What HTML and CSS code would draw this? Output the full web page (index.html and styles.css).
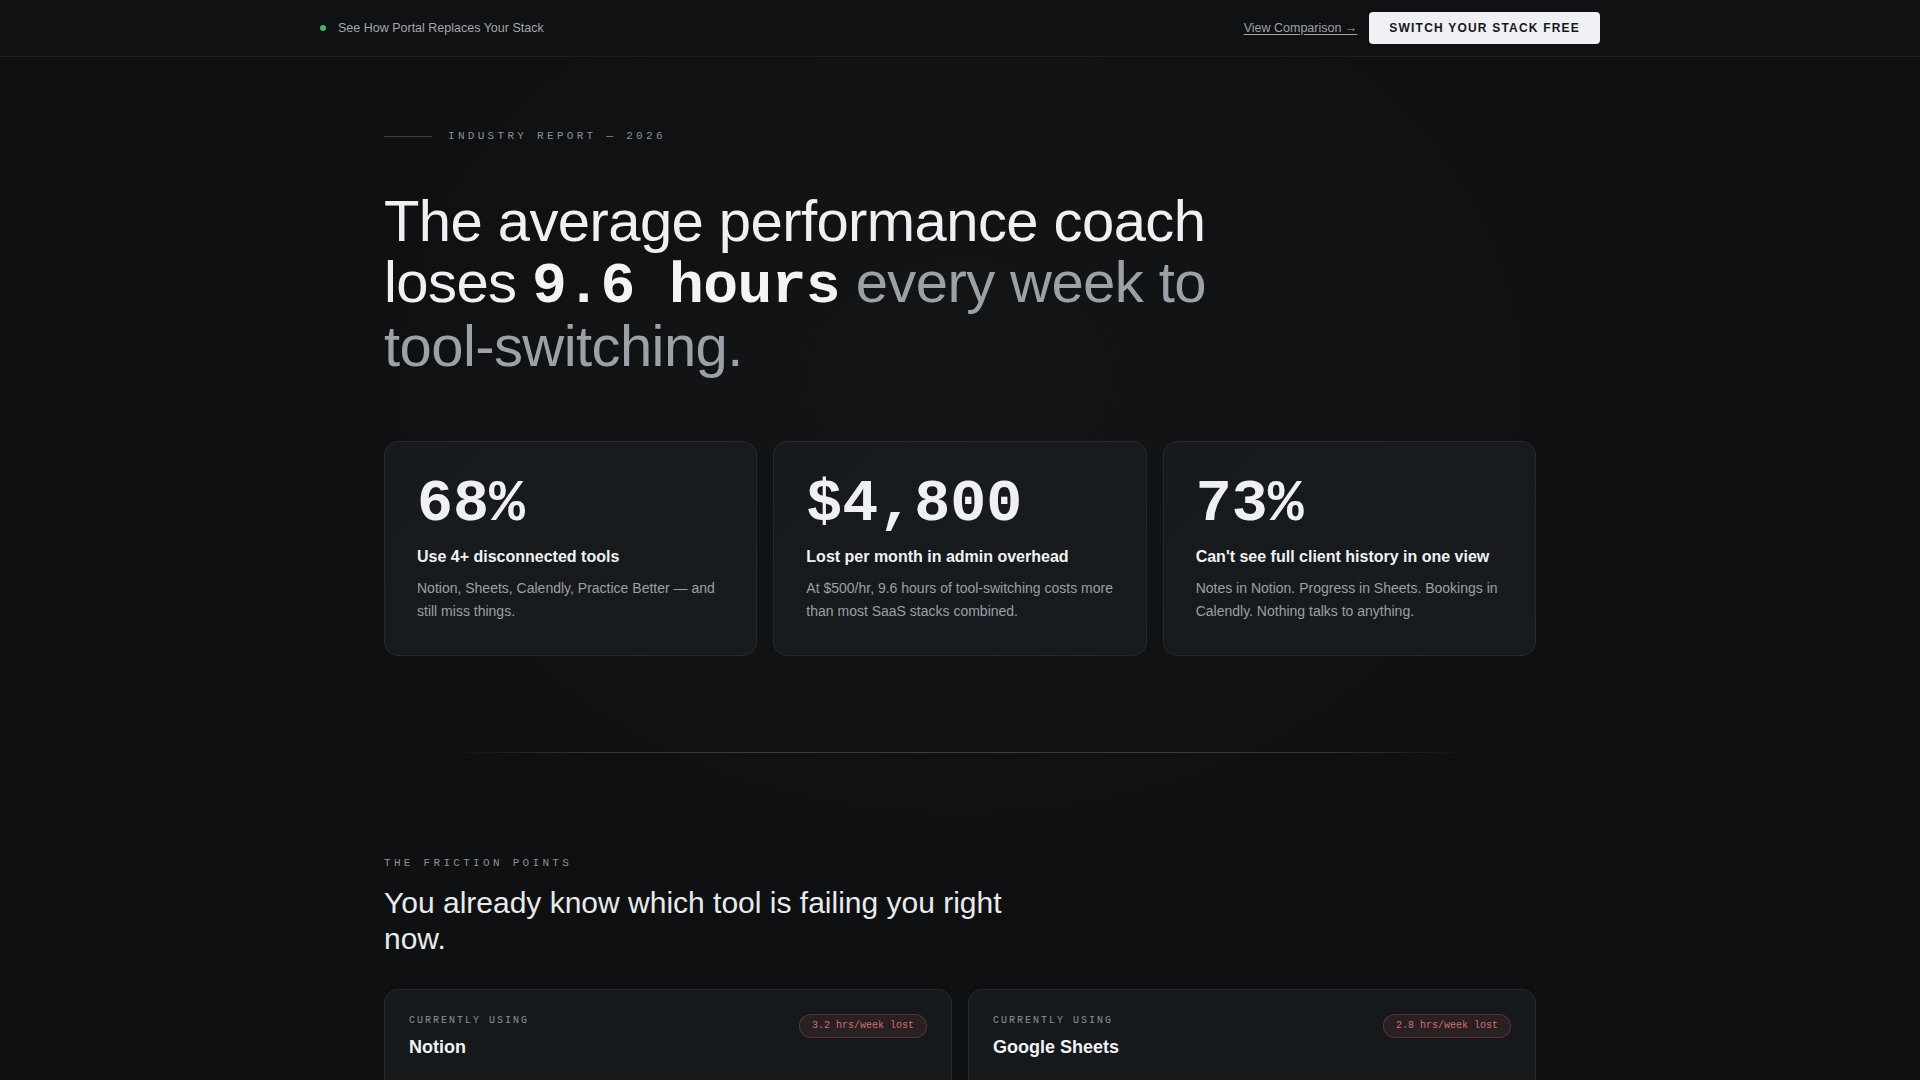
FILE: index.html
```html
<!DOCTYPE html>
<html lang="en">
<head>
  <meta charset="UTF-8">
  <meta name="viewport" content="width=device-width, initial-scale=1.0">
  <title>Portal — Industry Report 2026</title>
  <link rel="stylesheet" href="styles.css">
</head>
<body>
  <header class="topbar">
    <div class="topbar-inner">
      <div class="topbar-note">
        <span class="dot"></span>
        <span>See How Portal Replaces Your Stack</span>
      </div>
      <div class="topbar-actions">
        <a href="#" class="link-compare">View Comparison →</a>
        <a href="#" class="btn-light">Switch Your Stack Free</a>
      </div>
    </div>
  </header>

  <main class="page">
    <!-- Hero -->
    <section class="hero">
      <div class="eyebrow">
        <span class="eyebrow-line"></span>
        <span>Industry Report — 2026</span>
      </div>
      <h1 class="hero-title">
        The average performance coach loses <span class="mono-strong">9.6 hours</span>
        <span class="muted">every week to tool-switching.</span>
      </h1>

      <div class="stats">
        <div class="stat-card">
          <div class="stat-num">68%</div>
          <div class="stat-title">Use 4+ disconnected tools</div>
          <p class="stat-desc">Notion, Sheets, Calendly, Practice Better — and still miss things.</p>
        </div>
        <div class="stat-card">
          <div class="stat-num">$4,800</div>
          <div class="stat-title">Lost per month in admin overhead</div>
          <p class="stat-desc">At $500/hr, 9.6 hours of tool-switching costs more than most SaaS stacks combined.</p>
        </div>
        <div class="stat-card">
          <div class="stat-num">73%</div>
          <div class="stat-title">Can't see full client history in one view</div>
          <p class="stat-desc">Notes in Notion. Progress in Sheets. Bookings in Calendly. Nothing talks to anything.</p>
        </div>
      </div>
    </section>

    <div class="divider"></div>

    <!-- Friction points -->
    <section class="friction">
      <div class="section-label">The Friction Points</div>
      <h2 class="section-title">You already know which tool is failing you right now.</h2>

      <div class="tools">
        <div class="tool-card">
          <div class="tool-head">
            <div>
              <div class="tool-label">Currently using</div>
              <div class="tool-name">Notion</div>
            </div>
            <span class="badge-lost">3.2 hrs/week lost</span>
          </div>
        </div>
        <div class="tool-card">
          <div class="tool-head">
            <div>
              <div class="tool-label">Currently using</div>
              <div class="tool-name">Google Sheets</div>
            </div>
            <span class="badge-lost">2.8 hrs/week lost</span>
          </div>
        </div>
      </div>
    </section>
  </main>
</body>
</html>
```

FILE: styles.css
```css
/* Base */
body {
  margin: 0;
  font-family: 'Liberation Sans', Arial, sans-serif;
  color: #eef0f3;
  background:
    radial-gradient(ellipse 900px 700px at 50% 30%, rgba(255, 255, 255, 0.018), transparent 70%),
    #0e1012;
  min-height: 100vh;
}

a {
  color: inherit;
}

/* Top bar */
.topbar {
  height: 56px;
  border-bottom: 1px solid #1d2024;
  background: #0f1113;
}

.topbar-inner {
  max-width: 1280px;
  height: 100%;
  margin: 0 auto;
  display: flex;
  align-items: center;
  justify-content: space-between;
}

.topbar-note {
  display: flex;
  align-items: center;
  gap: 12px;
  font-size: 12.5px;
  color: #a3a8ae;
}

.dot {
  width: 6px;
  height: 6px;
  border-radius: 50%;
  background: #3fb56a;
}

.topbar-actions {
  display: flex;
  align-items: center;
  gap: 12px;
}

.link-compare {
  font-size: 12.5px;
  color: #9ea3a9;
  text-decoration: underline;
  text-underline-offset: 2px;
}

.btn-light {
  display: inline-flex;
  align-items: center;
  height: 32px;
  padding: 0 20px;
  border-radius: 4px;
  background: #eef0f3;
  color: #15171a;
  font-size: 12px;
  font-weight: 700;
  letter-spacing: 0.1em;
  text-transform: uppercase;
  text-decoration: none;
}

/* Page */
.page {
  max-width: 1152px;
  margin: 0 auto;
}

.hero {
  padding-top: 71px;
  padding-bottom: 96px;
}

.eyebrow {
  display: flex;
  align-items: center;
  gap: 16px;
  font-family: 'Liberation Mono', monospace;
  font-size: 11px;
  line-height: 16px;
  letter-spacing: 0.3em;
  text-transform: uppercase;
  color: #8b9096;
  margin-bottom: 47px;
}

.eyebrow-line {
  width: 48px;
  height: 1px;
  background: #3a3e43;
}

.hero-title {
  margin: 0;
  max-width: 860px;
  font-size: 58px;
  font-weight: 400;
  line-height: 1.05;
  letter-spacing: -0.01em;
  color: #eef0f3;
}

.mono-strong {
  font-family: 'Liberation Mono', monospace;
  font-weight: 700;
  line-height: 1;
  color: #f3f4f6;
}

.muted {
  color: #9ba1a8;
}

/* Stat cards */
.stats {
  display: grid;
  grid-template-columns: repeat(3, 1fr);
  gap: 16px;
  margin-top: 64px;
}

.stat-card {
  padding: 32px;
  border: 1px solid #25292d;
  border-radius: 14px;
  background: linear-gradient(135deg, #171a1d, #181b1e);
}

.stat-num {
  font-family: 'Liberation Mono', monospace;
  font-size: 60px;
  font-weight: 700;
  line-height: 1;
  color: #eef0f3;
}

.stat-title {
  margin-top: 12px;
  font-size: 16px;
  font-weight: 700;
  line-height: 22px;
  color: #f0f2f4;
}

.stat-desc {
  margin: 9px 0 0;
  font-size: 14px;
  line-height: 23px;
  color: #9aa0a6;
}

.divider {
  height: 1px;
  margin: 0 60px;
  background: linear-gradient(90deg, transparent, #34383d 15%, #3c4046 50%, #34383d 85%, transparent);
}

/* Friction points */
.friction {
  padding-top: 102px;
}

.section-label {
  font-family: 'Liberation Mono', monospace;
  font-size: 11px;
  line-height: 16px;
  letter-spacing: 0.3em;
  text-transform: uppercase;
  color: #8b9096;
  margin-bottom: 14px;
}

.section-title {
  margin: 0;
  max-width: 640px;
  font-size: 30px;
  font-weight: 400;
  line-height: 36px;
  color: #e8eaed;
}

.tools {
  display: grid;
  grid-template-columns: 1fr 1fr;
  gap: 16px;
  margin-top: 32px;
}

.tool-card {
  min-height: 220px;
  padding: 24px;
  border: 1px solid #25292d;
  border-radius: 14px;
  background: #16191c;
}

.tool-head {
  display: flex;
  justify-content: space-between;
  align-items: flex-start;
}

.tool-label {
  font-family: 'Liberation Mono', monospace;
  font-size: 10px;
  line-height: 14px;
  letter-spacing: 0.2em;
  text-transform: uppercase;
  color: #8b9096;
}

.tool-name {
  margin-top: 8px;
  font-size: 18px;
  font-weight: 700;
  line-height: 23px;
  color: #f0f2f4;
}

.badge-lost {
  padding: 4px 12px;
  border: 1px solid rgba(214, 96, 96, 0.28);
  border-radius: 999px;
  background: rgba(214, 96, 96, 0.1);
  font-family: 'Liberation Mono', monospace;
  font-size: 10px;
  line-height: 14px;
  color: #cf6f6f;
}
```
